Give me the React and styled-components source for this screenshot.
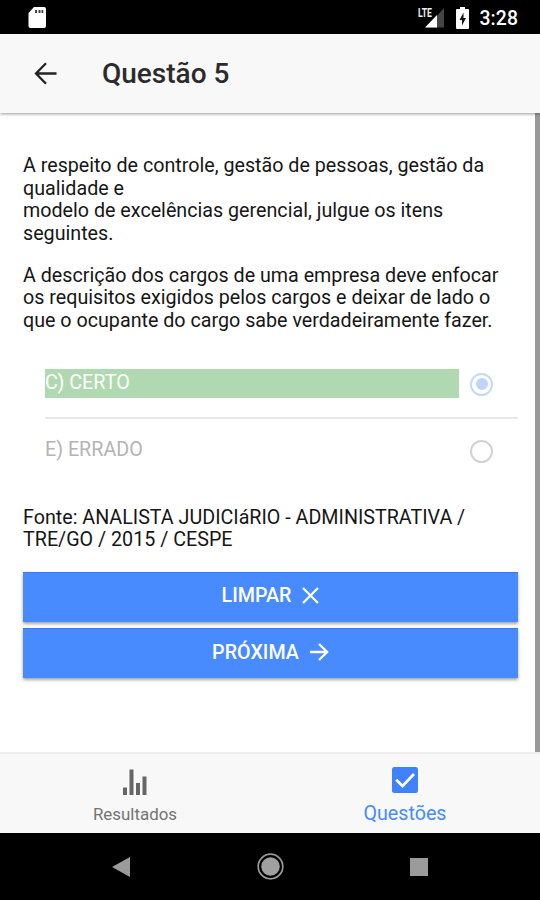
import React, { useState } from 'react';
import styled, { createGlobalStyle } from 'styled-components';

const GlobalStyle = createGlobalStyle`
  * {
    box-sizing: border-box;
  }
  body {
    background: #fff;
    font-family: Roboto, sans-serif;
    margin: 0;
  }
  button {
    background: none;
    border: none;
    font-family: inherit;
    padding: 0;
  }
  svg {
    display: block;
    overflow: visible;
  }
`;

const Screen = styled.div`
  display: flex;
  flex-direction: column;
  height: 900px;
  overflow: hidden;
  width: 540px;
`;

const StatusBar = styled.div`
  align-items: center;
  background: #000;
  color: #fff;
  display: flex;
  flex: none;
  height: 34px;
  padding: 1px 22px 0 28px;
`;
const StatusIcons = styled.div`
  align-items: center;
  display: flex;
  gap: 12px;
  margin-left: auto;
`;
const Clock = styled.span`
  font-size: 19.4px;
  font-weight: 500;
  letter-spacing: 0.1px;
  line-height: 24px;
  margin: 3px 0 0 -2px;
`;

const Header = styled.header`
  align-items: center;
  background: #f8f8f8;
  box-shadow: 0 1px 3px rgba(0, 0, 0, 0.4);
  display: flex;
  flex: none;
  height: 79px;
  padding-left: 34px;
  z-index: 1;
`;
const Title = styled.h1`
  color: #2b2b2b;
  font-size: 28px;
  font-weight: 500;
  line-height: 34px;
  margin: 0 0 0 45px;
`;

const Content = styled.main`
  background: #fff;
  border-right: 5px solid #999;
  flex: 1;
  min-height: 0;
  padding: 42px 17px 0 23px;
`;
const Text = styled.p`
  color: #161616;
  font-size: 19.69px;
  line-height: 22.5px;
  margin: 0 0 19.7px;
  white-space: nowrap;
`;

const Options = styled.div`
  margin-bottom: 22.5px;
`;
const Option = styled.div`
  align-items: center;
  border-bottom: ${(p) => (p.$last ? 'none' : '2px solid #e8e8e8')};
  display: flex;
  height: ${(p) => (p.$last ? '65.5px' : '67px')};
  margin-left: 22px;
`;
const OptionLabel = styled.div`
  background: ${(p) => (p.$correct ? '#b0d8b1' : 'transparent')};
  color: ${(p) => (p.$correct ? '#fff' : '#b4b4b4')};
  flex: 1;
  font-size: 19.69px;
  height: 29px;
  line-height: 27px;
  margin: 0 11px 1.5px 0;
`;
const Radio = styled.span`
  align-items: center;
  border: 2.6px solid ${(p) => (p.$checked ? '#c5d9fd' : '#d2d2d2')};
  border-radius: 50%;
  display: flex;
  height: 23px;
  justify-content: center;
  margin-right: 25px;
  width: 23px;

  &::after {
    background: ${(p) => (p.$checked ? '#bdd4fd' : 'transparent')};
    border-radius: 50%;
    content: '';
    height: 12px;
    width: 12px;
  }
`;

const Button = styled.button`
  align-items: center;
  background: #488aff;
  box-shadow: 0 2px 3px rgba(0, 0, 0, 0.35), inset 0 1px 0 #347bf6;
  color: #fff;
  cursor: pointer;
  display: flex;
  font-size: 19.69px;
  font-weight: 500;
  gap: 11px;
  height: 50.5px;
  justify-content: center;
  margin-bottom: 5.7px;
  padding-bottom: 2px;
  width: 100%;
`;

const Tabs = styled.nav`
  background: #f8f8f8;
  border-top: 2px solid #ededed;
  display: flex;
  flex: none;
  height: 81px;
`;
const Tab = styled.button`
  align-items: center;
  color: ${(p) => (p.$active ? '#488aff' : '#747474')};
  cursor: pointer;
  display: flex;
  flex: 1;
  flex-direction: column;
  font-size: ${(p) => (p.$active ? '19.69px' : '16.9px')};
  padding-top: ${(p) => (p.$active ? '13px' : '15px')};

  span {
    line-height: 24px;
    margin-top: ${(p) => (p.$active ? '9px' : '7px')};
  }
`;

const SystemNav = styled.div`
  align-items: center;
  background: #000;
  display: flex;
  flex: none;
  height: 67px;
  justify-content: space-between;
  padding: 0 112px;
`;

const SdCardIcon = () => (
  <svg width="18" height="21" viewBox="0 0 18 21">
    <path d="M6 0h10a2 2 0 0 1 2 2v17a2 2 0 0 1-2 2H2.500a2 2 0 0 1-2-2V6z" fill="#fff" />
    <path d="M7 3h2v3H7zM10.500 3h2v3h-2zM13.500 3h1.800v3h-1.800z" fill="#444" />
  </svg>
);

const SignalIcon = () => (
  <svg width="27" height="22" viewBox="0 0 27 22">
    <path d="M27 1v19.500H9z" fill="#444" />
    <path d="M20 8v12.500H8z" fill="#fff" />
    <text x="1" y="9.500" fill="#eee" fontSize="12" fontWeight="700" textLength="14" lengthAdjust="spacingAndGlyphs">
      LTE
    </text>
  </svg>
);

const BatteryIcon = () => (
  <svg width="13" height="22" viewBox="0 0 13 22">
    <path d="M4 0h5v2h3a1 1 0 0 1 1 1v18a1 1 0 0 1-1 1H1a1 1 0 0 1-1-1V3a1 1 0 0 1 1-1h3z" fill="#fff" />
    <path d="M7.500 5.500 3.500 13h2.500v5.500L10 11H7.500z" fill="#111" />
  </svg>
);

const BackIcon = () => (
  <svg width="23" height="23" viewBox="0 0 23 23" fill="none" stroke="#222" strokeWidth="2.300">
    <path d="M22.500 11.500H2.500M12 1.200 2 11.500 12 21.800" />
  </svg>
);

const CloseIcon = () => (
  <svg width="17" height="17" viewBox="0 0 17 17" stroke="#fff" strokeWidth="2.300">
    <path d="M1 1l15 15M16 1 1 16" />
  </svg>
);

const ForwardIcon = () => (
  <svg width="19" height="18" viewBox="0 0 19 18" fill="none" stroke="#fff" strokeWidth="2.300">
    <path d="M0 9h17M9 1l8.200 8L9 17" />
  </svg>
);

const StatsIcon = () => (
  <svg width="24" height="26" viewBox="0 0 24 26" fill="#666">
    <path d="M0 18.500h4V26H0zM6.500 0.500h4V26h-4zM13 14h4v12h-4zM19.500 7.500h4V26h-4z" />
  </svg>
);

const CheckboxIcon = () => (
  <svg width="26" height="26" viewBox="0 0 26 26">
    <rect width="26" height="26" rx="2.500" fill="#3f82fb" />
    <path d="M4.200 12.800l6.300 6.200L22 7" fill="none" stroke="#fff" strokeWidth="2.700" />
  </svg>
);

const NavBackIcon = () => (
  <svg width="18" height="20" viewBox="0 0 18 20">
    <path d="M18 0v20L0 10z" fill="#9b9b9b" />
  </svg>
);

const NavHomeIcon = () => (
  <svg width="27" height="27" viewBox="0 0 27 27">
    <circle cx="13.500" cy="13.500" r="12.300" fill="none" stroke="#999" strokeWidth="1.700" />
    <circle cx="13.500" cy="13.500" r="9.300" fill="#a0a0a0" />
  </svg>
);

const NavRecentIcon = () => (
  <svg width="18" height="18" viewBox="0 0 18 18">
    <rect width="18" height="18" fill="#9b9b9b" />
  </svg>
);

const options = [
  { id: 'C', label: 'C) CERTO', correct: true },
  { id: 'E', label: 'E) ERRADO', correct: false },
];

const App = () => {
  const [answer, setAnswer] = useState('C');
  const handleClear = () => setAnswer(null);

  return (
    <>
      <GlobalStyle />
      <Screen>
        <StatusBar>
          <SdCardIcon />
          <StatusIcons>
            <SignalIcon />
            <BatteryIcon />
            <Clock>3:28</Clock>
          </StatusIcons>
        </StatusBar>
        <Header>
          <BackIcon />
          <Title>Questão 5</Title>
        </Header>
        <Content>
          <Text>
            A respeito de controle, gestão de pessoas, gestão da
            <br />
            qualidade e
            <br />
            modelo de excelências gerencial, julgue os itens
            <br />
            seguintes.
          </Text>
          <Text>
            A descrição dos cargos de uma empresa deve enfocar
            <br />
            os requisitos exigidos pelos cargos e deixar de lado o
            <br />
            que o ocupante do cargo sabe verdadeiramente fazer.
          </Text>
          <Options>
            {options.map((option, i) => (
              <Option key={option.id} $last={i === options.length - 1}>
                <OptionLabel $correct={option.correct && answer !== null}>{option.label}</OptionLabel>
                <Radio $checked={answer === option.id} />
              </Option>
            ))}
          </Options>
          <Text>
            Fonte: ANALISTA JUDICIáRIO - ADMINISTRATIVA /
            <br />
            TRE/GO / 2015 / CESPE
          </Text>
          <Button onClick={handleClear}>
            LIMPAR <CloseIcon />
          </Button>
          <Button>
            PRÓXIMA <ForwardIcon />
          </Button>
        </Content>
        <Tabs>
          <Tab>
            <StatsIcon />
            <span>Resultados</span>
          </Tab>
          <Tab $active>
            <CheckboxIcon />
            <span>Questões</span>
          </Tab>
        </Tabs>
        <SystemNav>
          <NavBackIcon />
          <NavHomeIcon />
          <NavRecentIcon />
        </SystemNav>
      </Screen>
    </>
  );
};

export default App;
